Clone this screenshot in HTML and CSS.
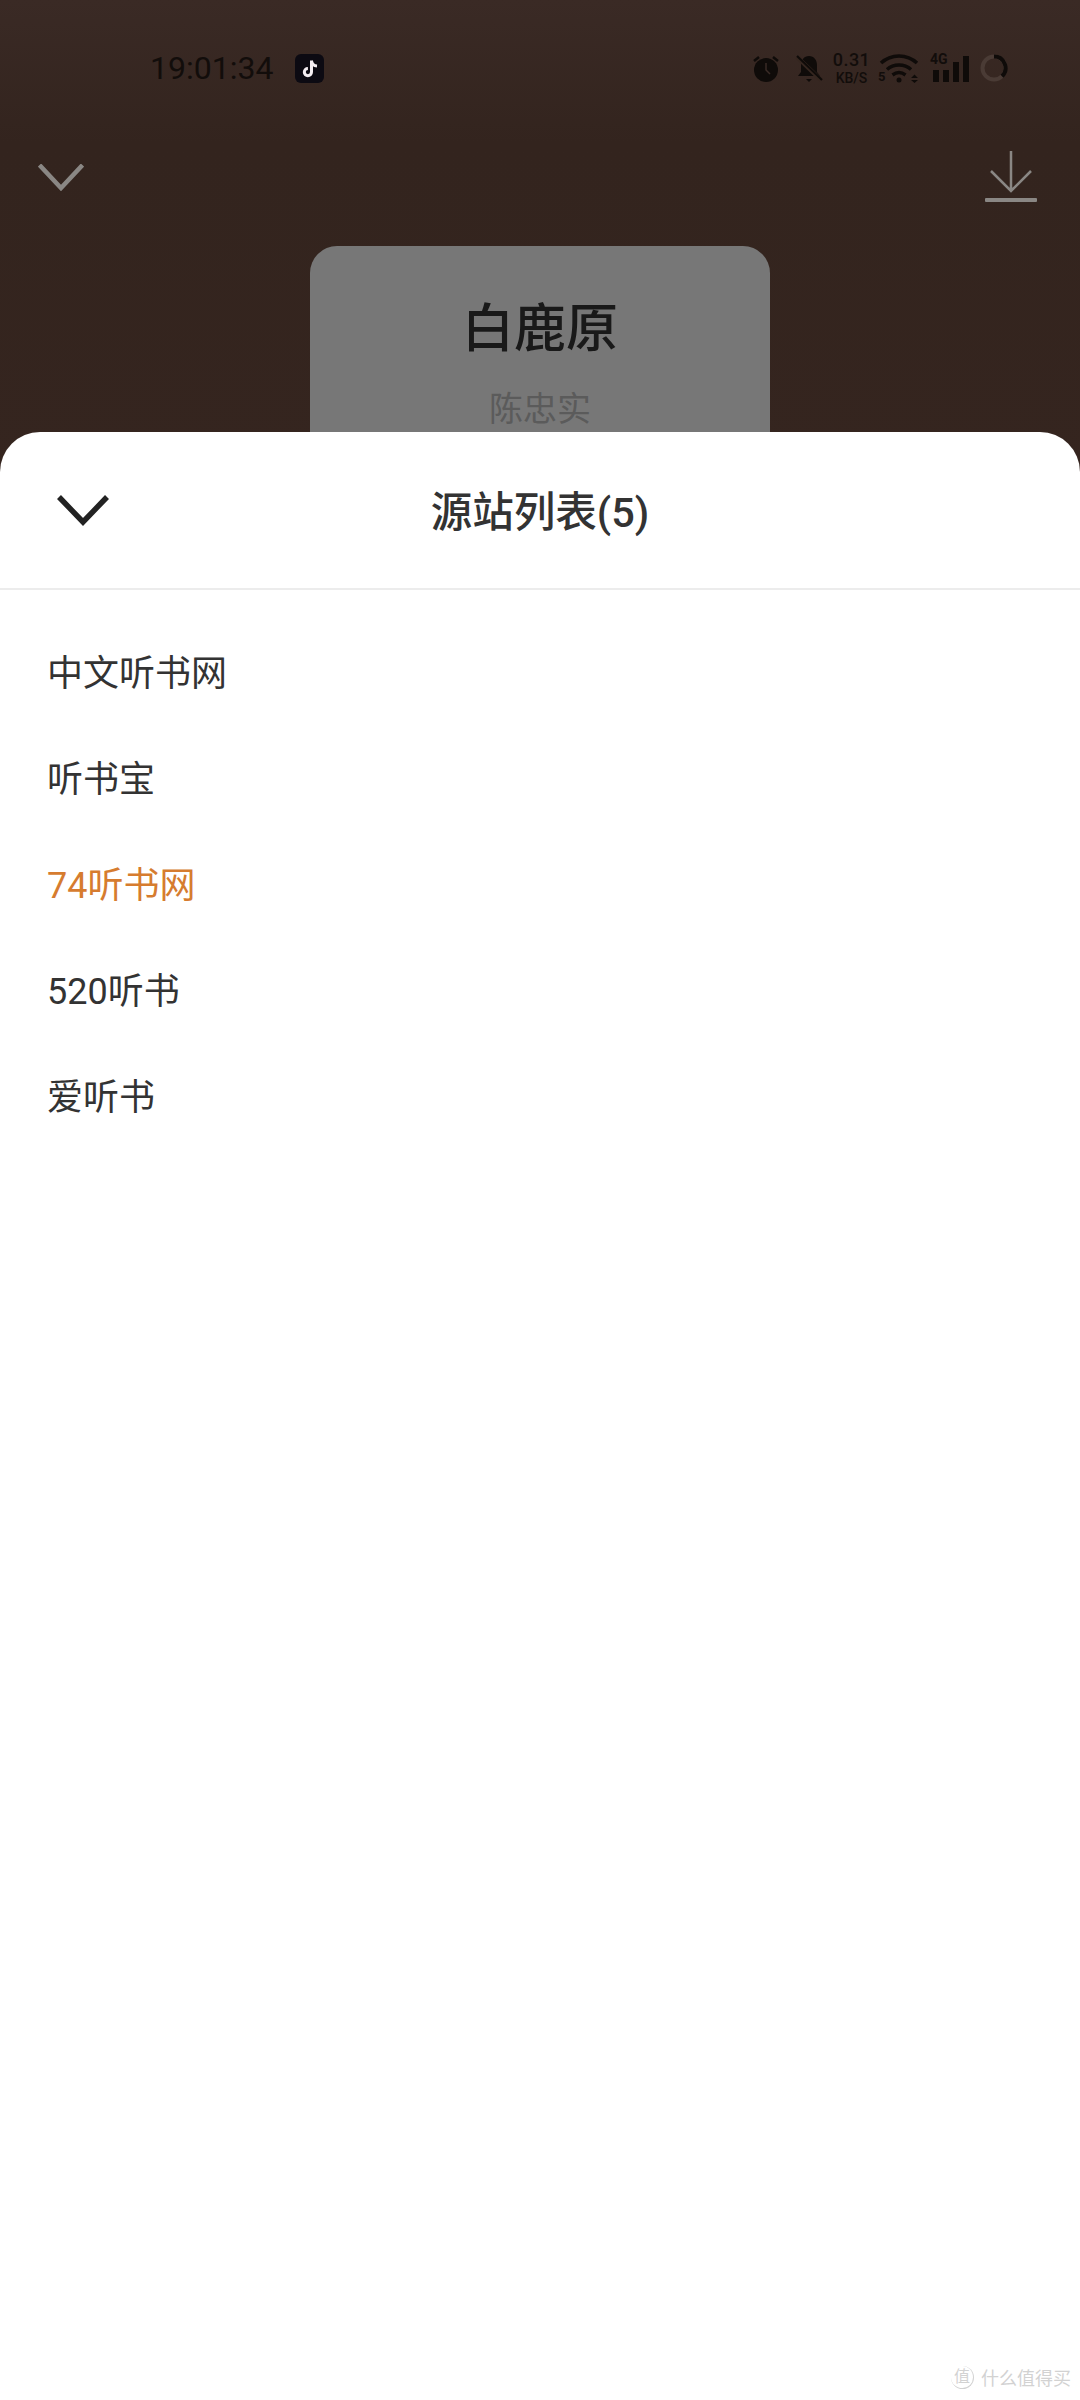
FILE: index.html
```html
<!DOCTYPE html>
<html lang="zh-CN">
<head>
  <meta charset="UTF-8">
  <title>源站列表</title>
  <meta name="viewport" content="width=device-width, initial-scale=1.0">
  <link rel="stylesheet" href="styles.css">
</head>
<body>

  <div class="phone">
    <div class="player">
      <div class="status-bar">
        <span class="clock">19:01:34</span>
        <svg class="tiktok" width="29" height="29" viewBox="0 0 29 29">
          <rect width="29" height="29" rx="6" fill="#0c0a12"/>
          <path d="M16.500 6.500v11.600a3.600 3.600 0 1 1-3.600-3.600" fill="none" stroke="#f4eef2" stroke-width="3"/>
          <path d="M16.500 7c.5 3 2.500 4.800 5.500 5" fill="none" stroke="#f4eef2" stroke-width="3"/>
        </svg>
        <div class="status-icons">
          <svg class="alarm" width="28" height="29" viewBox="0 0 28 29">
            <circle cx="14" cy="16" r="12" fill="#0f0b09"/>
            <path d="M14 9v7l4 4" fill="none" stroke="#3a2b26" stroke-width="1.500"/>
            <path d="M2 7l5-4M26 7l-5-4" stroke="#0f0b09" stroke-width="2.500"/>
          </svg>
          <svg width="28" height="29" viewBox="0 0 28 29">
            <path d="M14 2c-5 0-8 4-8 9v7l-3 4h22l-3-4v-7c0-5-3-9-8-9z" fill="#0f0b09"/>
            <path d="M11 25h6l-3 3z" fill="#0f0b09"/>
            <path d="M2 3l24 23" stroke="#35261f" stroke-width="4.500"/>
            <path d="M2 2l25 24" stroke="#0f0b09" stroke-width="2"/>
          </svg>
          <div class="speed">
            <span class="speed-num">0.31</span>
            <span class="speed-unit">KB/S</span>
          </div>
          <div class="wifi">
            <svg width="42" height="30" viewBox="0 0 42 30">
              <path d="M3 10c10-9.500 26-9.500 36 0M9 16.500c6.500-6 17.500-6 24 0M14.500 22c4-3 9-3 13 0" fill="none" stroke="#0f0b09" stroke-width="3.500"/>
              <circle cx="21" cy="27" r="2.500" fill="#0f0b09"/>
              <path d="M33 25l3.500-3.500 3.500 3.500zM33 27l3.500 3 3.500-3z" fill="#0f0b09"/>
            </svg>
            <span class="wifi-five">5</span>
          </div>
          <div class="signal">
            <span class="signal-label">4G</span>
            <i class="bar bar-1"></i>
            <i class="bar bar-2"></i>
            <i class="bar bar-3"></i>
            <i class="bar bar-4"></i>
          </div>
          <svg width="28" height="28" viewBox="0 0 28 28">
            <circle cx="14" cy="14" r="11.500" fill="none" stroke="#4a3b35" stroke-width="4"/>
            <path d="M14 2.500a11.500 11.500 0 0 1 8 19.800" fill="none" stroke="#0f0b09" stroke-width="4"/>
          </svg>
        </div>
      </div>

      <div class="toolbar">
        <svg width="46" height="27" viewBox="0 0 46 27">
          <path d="M1.500 1l21.500 23L44.500 1" fill="none" stroke="#8a8784" stroke-width="4.500"/>
        </svg>
        <svg width="52" height="52" viewBox="0 0 52 52">
          <path d="M26 0v39M6 20l20 20 20-20" fill="none" stroke="#8a8784" stroke-width="2.500"/>
          <rect y="47" width="52" height="4" rx="1" fill="#8a8784"/>
        </svg>
      </div>

      <div class="book-card">
        <div class="book-title">白鹿原</div>
        <div class="book-author">陈忠实</div>
      </div>
    </div>

    <div class="sheet">
      <div class="sheet-header">
        <svg class="sheet-close" width="52" height="31" viewBox="0 0 52 31">
          <path d="M2 2l24 25L50 2" fill="none" stroke="#222" stroke-width="5.500"/>
        </svg>
        <h1>源站列表(5)</h1>
      </div>

      <div class="source-list">
        <div class="source-item">中文听书网</div>
        <div class="source-item">听书宝</div>
        <div class="source-item active">74听书网</div>
        <div class="source-item">520听书</div>
        <div class="source-item">爱听书</div>
      </div>

      <div class="watermark">
        <span class="watermark-logo">值</span>
        <span>什么值得买</span>
      </div>
    </div>
  </div>

</body>
</html>
```

FILE: styles.css
```css
body {
  font-family: Roboto, 'Noto Sans CJK SC', sans-serif;
  margin: 0;
  padding: 0;
  background: #fff;
  color: #333;
}

.phone {
  width: 1080px;
  height: 2400px;
  display: flex;
  flex-direction: column;
  overflow: hidden;
}

.player {
  height: 480px;
  flex-shrink: 0;
  overflow: hidden;
  background: linear-gradient(#3a2a25, #33241e 30%, #35251f);
}

.status-bar {
  height: 136px;
  padding: 0 72px 0 150px;
  box-sizing: border-box;
  display: flex;
  align-items: center;
  color: #120d0b;
}

.clock {
  font-size: 32px;
  width: 145px;
}

.status-icons {
  margin-left: auto;
  display: flex;
  align-items: center;
  gap: 10px;
}

.alarm {
  margin-right: 5px;
}

.speed {
  width: 37px;
  display: flex;
  flex-direction: column;
  align-items: center;
  gap: 2px;
  line-height: 1;
  font-weight: 500;
}

.speed-num {
  font-size: 18px;
  letter-spacing: 0.5px;
}

.speed-unit {
  font-size: 14px;
}

.wifi {
  position: relative;
  width: 42px;
  height: 30px;
  margin-left: -2px;
}

.wifi-five {
  position: absolute;
  left: 0;
  bottom: 0;
  font-size: 13px;
  font-weight: 700;
  line-height: 1;
}

.signal {
  position: relative;
  width: 37px;
  height: 28px;
  padding-left: 3px;
  display: flex;
  align-items: flex-end;
  gap: 4px;
}

.signal-label {
  position: absolute;
  left: 0;
  top: -2px;
  font-size: 14px;
  font-weight: 700;
  line-height: 1;
}

.bar {
  width: 6px;
  background: #0f0b09;
}

.bar-1 { height: 12px; }
.bar-2 { height: 12px; }
.bar-3 { height: 20px; }
.bar-4 { height: 26px; }

.toolbar {
  height: 82px;
  padding: 0 43px 0 38px;
  display: flex;
  justify-content: space-between;
  align-items: center;
}

.book-card {
  width: 460px;
  height: 300px;
  margin: 28px auto 0;
  padding-top: 51px;
  box-sizing: border-box;
  background: #777;
  border-radius: 27px;
  text-align: center;
}

.book-title {
  font-size: 52px;
  font-weight: 500;
  line-height: 66px;
  color: #191919;
}

.book-author {
  font-size: 34px;
  line-height: 46px;
  margin-top: 23px;
  color: #5b5b5b;
}

.sheet {
  position: relative;
  flex: 1;
  margin-top: -48px;
  background: #fff;
  border-radius: 40px 40px 0 0;
}

.sheet-header {
  position: relative;
  height: 156px;
  padding-bottom: 3px;
  box-sizing: content-box;
  height: 153px;
  display: flex;
  align-items: center;
  justify-content: center;
  border-bottom: 2px solid #ececec;
}

.sheet-header h1 {
  margin: 0;
  font-size: 41.5px;
  font-weight: 500;
  color: #333;
}

.sheet-close {
  position: absolute;
  left: 57px;
  top: 63px;
}

.source-list {
  padding-top: 27px;
}

.source-item {
  height: 106px;
  padding-left: 47px;
  display: flex;
  align-items: center;
  font-size: 36px;
  color: #333;
}

.source-item.active {
  color: #d67c2f;
}

.watermark {
  position: absolute;
  right: 9px;
  bottom: 10px;
  display: flex;
  align-items: center;
  gap: 7px;
  font-size: 18px;
  color: #d2d2d2;
}

.watermark-logo {
  width: 22px;
  height: 22px;
  border-radius: 50%;
  border-right: 1px solid #d2d2d2;
  border-bottom: 1px solid #d2d2d2;
  font-size: 16px;
  line-height: 22px;
  text-align: center;
}
```
